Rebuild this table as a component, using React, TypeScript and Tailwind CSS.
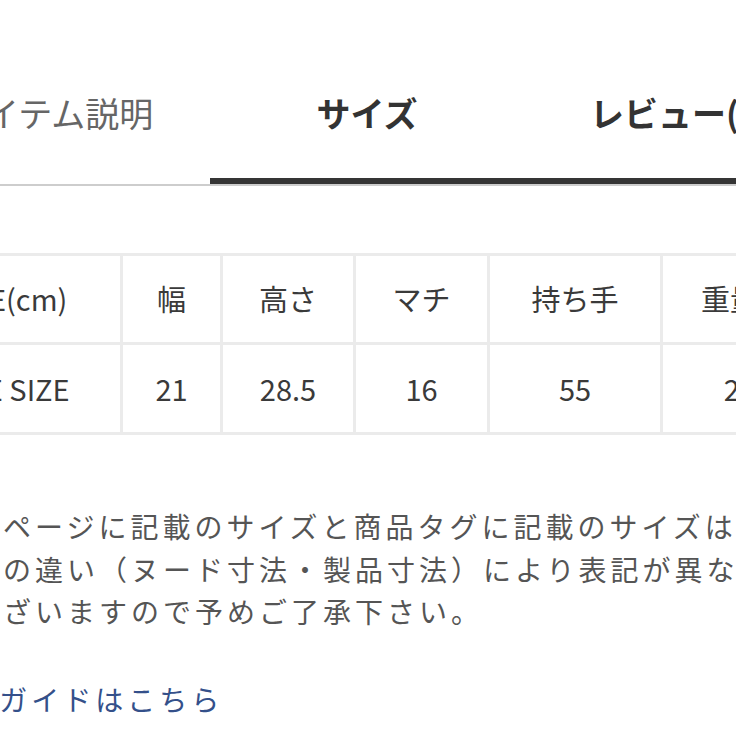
import React from 'react';

const font = { fontFamily: '"Noto Sans CJK JP", "Noto Sans", sans-serif' };

const headers = ['SIZE(cm)', '幅', '高さ', 'マチ', '持ち手', '重量(g)'];
const values = ['ONE SIZE', '21', '28.5', '16', '55', '240'];
const widths = ['w-[230px]', 'w-[100px]', 'w-[133px]', 'w-[134px]', 'w-[173px]', 'w-[173px]'];

export default function App() {
  return (
    <div className="w-[736px] h-[736px] overflow-hidden bg-white" style={font}>
      {/* tabs */}
      <div className="ml-[-104px] w-[942px] grid grid-cols-3 border-b-2 border-[#cdcdcd]">
        <div className="h-[184px] pt-[96px] text-center text-[34px] leading-[34px] text-[#666] border-b-[6px] border-transparent whitespace-nowrap">
          アイテム説明
        </div>
        <div className="h-[184px] pt-[96px] text-center text-[34px] leading-[34px] font-bold text-[#333] border-b-[6px] border-[#353535] whitespace-nowrap">
          サイズ
        </div>
        <div className="h-[184px] pt-[96px] text-center text-[34px] leading-[34px] font-bold text-[#333] border-b-[6px] border-[#353535] whitespace-nowrap">
          レビュー(0)
        </div>
      </div>

      {/* size table */}
      <table className="mt-[67px] ml-[-110px] w-[943px] min-w-[943px] border-collapse table-fixed text-[29px] text-[#3a3a3a]">
        <colgroup>
          {widths.map((w, i) => (
            <col key={i} className={w} />
          ))}
        </colgroup>
        <tbody>
          <tr className="h-[89px]">
            {headers.map((h) => (
              <td key={h} className="border-[3px] border-[#ebebeb] text-center font-normal whitespace-nowrap">
                {h}
              </td>
            ))}
          </tr>
          <tr className="h-[90px]">
            {values.map((v, i) => (
              <td key={i} className="border-[3px] border-[#ebebeb] text-center whitespace-nowrap">
                {v}
              </td>
            ))}
          </tr>
        </tbody>
      </table>

      {/* note */}
      <div className="mt-[70px] ml-[-29px] text-[28px] leading-[42.5px] tracking-[4px] text-[#555] whitespace-nowrap">
        <div>本ページに記載のサイズと商品タグに記載のサイズは、計測方</div>
        <div>法の違い（ヌード寸法・製品寸法）により表記が異なる場合が</div>
        <div>ございますので予めご了承下さい。</div>
      </div>

      <div className="mt-[45px] ml-[-96px] text-[28px] leading-[42.5px] tracking-[4px] text-[#34508a] whitespace-nowrap">
        サイズガイドはこちら
      </div>
    </div>
  );
}
